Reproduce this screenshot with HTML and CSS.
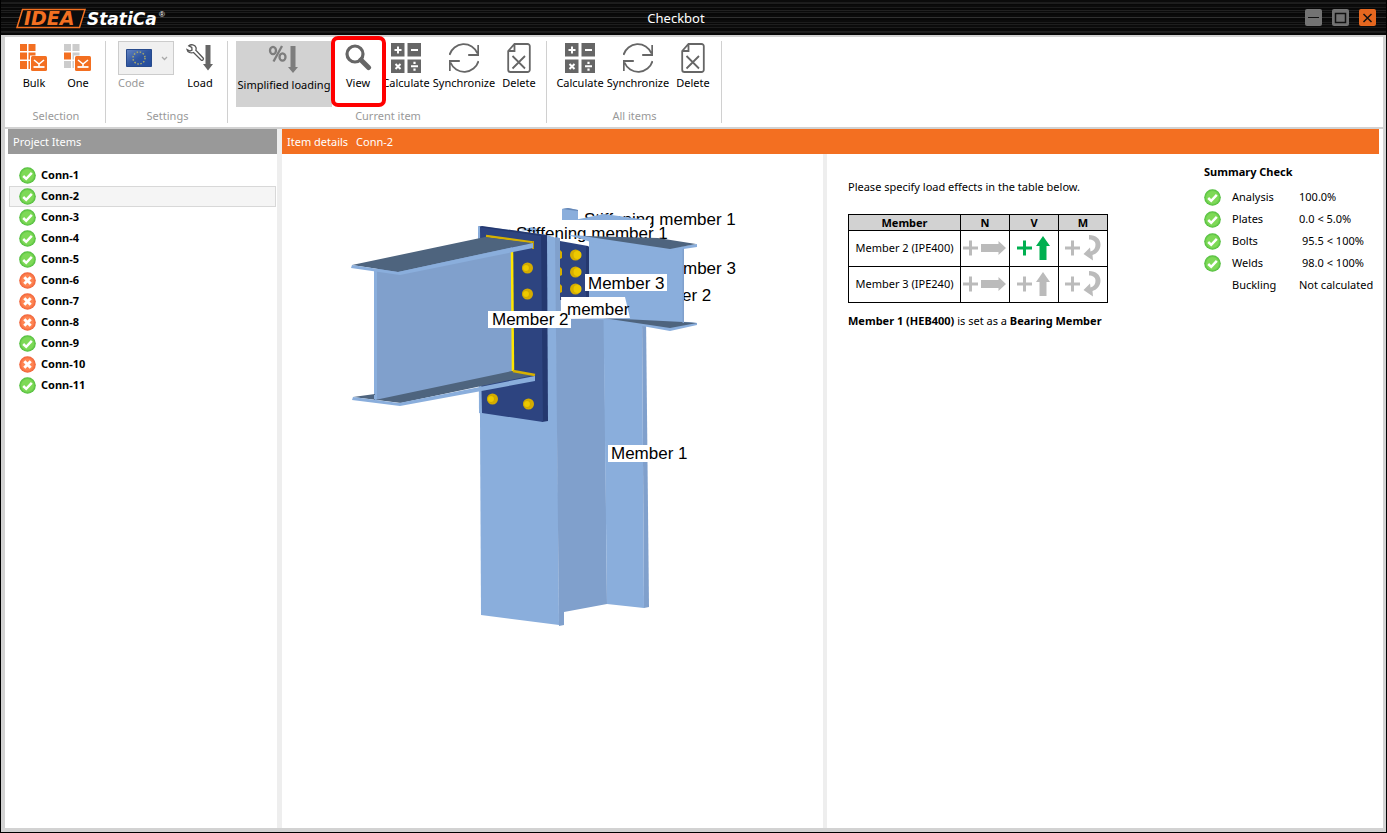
FILE: index.html
```html
<!DOCTYPE html>
<html lang="en">
<head>
<meta charset="utf-8">
<title>Checkbot</title>
<link rel="stylesheet" href="styles.css">
</head>
<body>
<svg class="defs" aria-hidden="true">
  <defs>
    <radialGradient id="gOk"><stop offset="0.7" stop-color="#7ed957"/><stop offset="1" stop-color="#4cba3a"/></radialGradient>
    <radialGradient id="gBad"><stop offset="0.65" stop-color="#ff8552"/><stop offset="1" stop-color="#ee6038"/></radialGradient>
    <symbol id="ok" viewBox="0 0 17 17"><circle cx="8.5" cy="8.5" r="8.3" fill="url(#gOk)"/><path d="M4.2 9l3 2.8 5.6-6" fill="none" stroke="#fff" stroke-width="2.5"/></symbol>
    <symbol id="bad" viewBox="0 0 17 17"><circle cx="8.5" cy="8.5" r="8.3" fill="url(#gBad)"/><path d="M5.3 5.3l6.4 6.4M11.7 5.3l-6.4 6.4" fill="none" stroke="#fff" stroke-width="3"/></symbol>
    <symbol id="calc" viewBox="0 0 30 30"><path fill="#666" d="M0 0h13.500v13.500H0zM16.500 0H30v13.500H16.500zM0 16.500h13.500V30H0zM16.500 16.500H30V30H16.500z"/><path d="M3.500 7h7M7 3.500v7M20 7h7M4.500 21l5 5M9.500 21l-5 5M20 23.300h7" stroke="#fff" stroke-width="2"/><path d="M22.400 18.800h2.200v2.200h-2.200zM22.400 25.600h2.200v2.200h-2.200z" fill="#fff"/></symbol>
    <symbol id="sync" viewBox="0 0 30 30"><path d="M.5 12A14.800 14.800 0 0 1 28.500 10.500M29.200 2v10h-10M29.500 18A14.800 14.800 0 0 1 1.500 19.500M.8 28V18h10" fill="none" stroke="#666" stroke-width="1.800"/></symbol>
    <symbol id="del" viewBox="0 0 24 30"><path d="M7.500 1H20.500a2.300 2.300 0 0 1 2.300 2.300V26.700a2.300 2.300 0 0 1-2.300 2.300H3.500a2.300 2.300 0 0 1-2.300-2.300V8zM7.500 1V8H1.200" fill="none" stroke="#666" stroke-width="1.800"/><path d="M5.500 13l12.500 12.500M18 13L5.500 25.500" stroke="#666" stroke-width="1.800"/></symbol>
    <symbol id="pick" viewBox="0 0 18 17"><path d="M1 1.500h17v15H1z" fill="#fff"/><rect x="2" y="2" width="16" height="15" rx="1.500" fill="#f36f21"/><path d="M4.500 13h11" stroke="#fff" stroke-width="1.800"/><path d="M5 6l5 4 5-4M10 9v3.500" fill="none" stroke="#fff" stroke-width="1.600"/></symbol>
    <symbol id="loadN" viewBox="0 0 44 26"><path d="M0 13h15M7.500 5.500v15" stroke="currentColor" stroke-width="3"/><path d="M18 9h17.500V6L43 13l-7.500 7v-3H18z" fill="currentColor"/></symbol>
    <symbol id="loadV" viewBox="0 0 44 26"><path d="M5 13h15M12.500 5.500v15" stroke="currentColor" stroke-width="3"/><path d="M27.500 25V11H24L31 1l7 10h-3.500v14z" fill="currentColor"/></symbol>
    <symbol id="loadM" viewBox="0 0 44 26"><path d="M4 13h15M11.500 5.500v15" stroke="currentColor" stroke-width="3"/><path d="M28 0c7 0 11.500 4 11.500 9.500 0 5-3 9-8 10.500l.5 5.500-9.500-6.500 6.500-6.500.5 4c3.500-1 5-3.500 5-7 0-3.500-3-5-6.500-5z" fill="currentColor"/></symbol>
  </defs>
</svg>

<div class="window">
  <header class="titlebar">
    <svg class="brand" width="152" height="24" viewBox="0 0 152 24" role="img" aria-label="IDEA StatiCa">
      <path d="M6.500 3.500h62.500l-5.500 18H1z" fill="#0c0c0c" stroke="#f37021" stroke-width="1.500"/>
      <text class="idea" x="8" y="19">IDEA</text>
      <text class="statica" x="71" y="19">StatiCa</text>
      <text class="reg" x="143" y="11">®</text>
    </svg>
    <h1 class="title">Checkbot</h1>
    <div class="controls">
      <button aria-label="Minimize"><svg viewBox="0 0 17 17"><path d="M3 8.500h11" stroke="#111"/></svg></button>
      <button aria-label="Maximize"><svg viewBox="0 0 17 17"><path d="M3.500 4.500h10v9h-10z" fill="none" stroke="#111" stroke-width="1.500"/></svg></button>
      <button class="close" aria-label="Close"><svg viewBox="0 0 17 17"><path d="M4.500 5l8 8M12.500 5l-8 8" stroke="#111" stroke-width="1.500"/></svg></button>
    </div>
  </header>

  <div class="frame">
    <nav class="ribbon">
      <section class="group">
        <div class="tools">
          <button class="tool"><svg width="28" height="30" viewBox="0 0 28 30"><path fill="#f36f21" d="M0 1h7v7H0zM8.500 1h7v7h-7zM0 9.500h7v7H0zM8.500 9.500h7v7h-7zM0 18h7v8H0zM8.500 18h7v8h-7z"/><use href="#pick" x="9" y="11" width="18" height="17"/></svg><span>Bulk</span></button>
          <button class="tool"><svg width="28" height="30" viewBox="0 0 28 30"><path fill="#ccc" d="M0 1h7v7H0zM8.500 1h7v7h-7zM8.500 9.500h7v7h-7zM0 18h7v7H0zM8.500 18h7v7h-7z"/><path fill="#f36f21" d="M0 9.500h7v7H0z"/><use href="#pick" x="9" y="11" width="18" height="17"/></svg><span>One</span></button>
        </div>
        <h2>Selection</h2>
      </section>
      <section class="group">
        <div class="tools spaced">
          <div class="code">
            <button class="combo" aria-label="Code" disabled>
              <svg width="26" height="18" viewBox="0 0 26 18"><defs><linearGradient id="eu" x2="1" y2="1"><stop stop-color="#6485c4"/><stop offset=".5" stop-color="#2f559f"/><stop offset="1" stop-color="#224b9c"/></linearGradient></defs><path fill="url(#eu)" stroke="#274a8c" d="M.5.500h25v17H.5z"/><circle cx="13" cy="9" r="6" fill="none" stroke="#a8a86a" stroke-width="1.500" stroke-dasharray="1.500 1.640"/></svg>
              <svg width="7" height="5" viewBox="0 0 7 5"><path d="M1 1l2.500 2.500L6 1" fill="none" stroke="#aaa" stroke-width="1.300"/></svg>
            </button>
            <span>Code</span>
          </div>
          <button class="tool"><svg width="28" height="30" viewBox="0 0 28 30"><path d="M1 6.500l3 1.500 2-1-.2-2.500-3-1.700C5 1 9 1.500 10 4.500c.4 1.200.2 2-.2 2.700l7.500 8c.7 1.200-1 2.800-2.200 1.800L7.500 9.500C5 10.500 1.500 9.500 1 6.500z" fill="#fff" stroke="#555" stroke-width="1.300"/><path fill="#666" d="M19.500 2h5v19h2.500l-5 6.500-5-6.500h2.500z"/></svg><span>Load</span></button>
        </div>
        <h2>Settings</h2>
      </section>
      <section class="group">
        <div class="tools wide">
          <button class="tool pressed"><svg width="32" height="30" viewBox="0 0 32 30"><g fill="none" stroke="#7d7d7d" stroke-width="2.300"><ellipse cx="5" cy="5.500" rx="3" ry="3.700"/><ellipse cx="14.500" cy="12" rx="3" ry="3.700"/><path d="M14 1L5.500 16.500"/></g><path fill="#7d7d7d" d="M22.500 1h5v21h2.500l-5 6-5-6h2.500z"/></svg><span>Simplified loading</span></button>
          <button class="tool view"><svg width="28" height="30" viewBox="0 0 28 30"><circle cx="11" cy="11" r="8" fill="none" stroke="#666" stroke-width="3.200"/><path d="M17 17l7.500 7.500" stroke="#666" stroke-width="5" stroke-linecap="round"/></svg><span>View</span></button>
          <button class="tool calc"><svg width="30" height="30"><use href="#calc"/></svg><span>Calculate</span></button>
          <button class="tool sync"><svg width="30" height="30"><use href="#sync"/></svg><span>Synchronize</span></button>
          <button class="tool"><svg width="24" height="30"><use href="#del"/></svg><span>Delete</span></button>
        </div>
        <h2>Current item</h2>
      </section>
      <section class="group">
        <div class="tools wide">
          <button class="tool calc"><svg width="30" height="30"><use href="#calc"/></svg><span>Calculate</span></button>
          <button class="tool sync"><svg width="30" height="30"><use href="#sync"/></svg><span>Synchronize</span></button>
          <button class="tool"><svg width="24" height="30"><use href="#del"/></svg><span>Delete</span></button>
        </div>
        <h2>All items</h2>
      </section>
    </nav>

    <main class="work">
      <aside class="items">
        <h2 class="bar gray">Project Items</h2>
        <ul>
          <li><svg><use href="#ok"/></svg>Conn-1</li>
          <li class="selected"><svg><use href="#ok"/></svg>Conn-2</li>
          <li><svg><use href="#ok"/></svg>Conn-3</li>
          <li><svg><use href="#ok"/></svg>Conn-4</li>
          <li><svg><use href="#ok"/></svg>Conn-5</li>
          <li><svg><use href="#bad"/></svg>Conn-6</li>
          <li><svg><use href="#bad"/></svg>Conn-7</li>
          <li><svg><use href="#bad"/></svg>Conn-8</li>
          <li><svg><use href="#ok"/></svg>Conn-9</li>
          <li><svg><use href="#bad"/></svg>Conn-10</li>
          <li><svg><use href="#ok"/></svg>Conn-11</li>
        </ul>
      </aside>
      <section class="details">
        <h2 class="bar orange"><span>Item details</span><span>Conn-2</span></h2>
        <div class="panes">
          <div class="scene">
            <svg width="541" height="500" viewBox="282 154 541 500" role="img" aria-label="Connection Conn-2 model">
              <g class="tag"><text x="584" y="225">Stiffening member 1</text><text x="683" y="274">mber 3</text><text x="682" y="301">er 2</text></g>
              <path fill="#8aaedc" d="M562 209l6-1 10 2v11h-16z"/><path fill="#6687b5" d="M562 209l6-1 10 2v1z"/>
              <path fill="#fff" d="M514 226l48-6h88v20H514z"/>
              <path fill="#8aaedc" d="M574 220l30-6 44 6zM521 230l11-3 6 2v4z"/>
              <g class="tag"><text x="516" y="239">Stiffening member 1</text></g>
              <!-- column -->
              <path fill="#8aaedc" d="M479 226l68 9 9 3 3 387-78-10z"/>
              <path fill="#80a0cc" d="M555 237l5 1 1 75h43l3 291-43 8v13l-5 1z"/>
              <path fill="#8aaedc" d="M603.500 315H642l2 293-37-4z"/>
              <path fill="#80a0cc" d="M642 315h4l3 292-5 1z"/>
              <!-- side beam -->
              <path fill="#2d4480" d="M560 241l28 5v54h-28z"/><path fill="#24386f" d="M586 246l3 .5V300h-3z"/>
              <path fill="#8aaedc" d="M589 240l95 8v78l-95-7z"/>
              <path fill="#8aaedc" d="M568 235l20 1 82 12 27-4v3l-27 4-79-9z"/>
              <path fill="#4e647e" d="M583 236l75 2 38 6-26 5z"/>
              <path fill="#8aaedc" d="M603 319l86 3 8 1v2l-27 6z"/>
              <path fill="#4e647e" d="M603 318l80 4 14 1-27 5z"/>
              <path fill="#80a0cc" d="M682.500 249l1.500-.5V323h-1.500z"/>
              <g fill="#d6ae00"><path d="M560 250l2 2v6l-2 1zM560 267l2 2v6l-2 1zM560 284l2 2v6l-2 1z"/><circle cx="575.500" cy="255" r="5.500"/><circle cx="575.500" cy="272" r="5.500"/><circle cx="575.500" cy="289" r="5.500"/></g>
              <g fill="#edc900"><circle cx="577.500" cy="255" r="4"/><circle cx="577.500" cy="272" r="4"/><circle cx="577.500" cy="289" r="4"/></g>
              <!-- end plate -->
              <path fill="#24386f" d="M478 227l4-1 65 9 1 186-6 1z"/>
              <path fill="#2d4480" d="M478 227l63 9 2 186-61-9z"/>
              <path fill="#8aaedc" d="M478 226l2 .5 1 187-2-.5z"/>
              <path d="M486 236l47 6.500" stroke="#d7b100" stroke-width="2.500"/><path d="M533 241v8" stroke="#bd9a00" stroke-width="2"/>
              <path fill="#80a0cc" d="M375 269l137-22 1 126-138 28z"/>
              <path d="M512 250l1 122" stroke="#ffe600" stroke-width="2.500"/>
              <path fill="#4e647e" d="M352 265l133-28 47 6-134 29z"/>
              <path fill="#8aaedc" d="M352 265l46 7 135-29v5l-133 27-49-7z"/>
              <path fill="#8aaedc" d="M374 270h3v130h-3z"/>
              <path fill="#4e647e" d="M353 397l22-3v6l137-29 22 4-133 28z"/>
              <path d="M513 371l22 4" stroke="#d7b100" stroke-width="2.500"/>
              <path fill="#8aaedc" d="M353 397l46 6 136-27v5l-135 25-48-6z"/><path fill="#8aaedc" d="M374 395h3v4h-3z"/>
              <g fill="#d4ac00"><circle cx="527.500" cy="268" r="5.500"/><circle cx="527.500" cy="294" r="5.500"/><circle cx="492.500" cy="399" r="5.500"/><circle cx="528.500" cy="404" r="5.500"/></g>
              <g fill="#edc900" stroke="#bd9a00" stroke-width=".6"><circle cx="526" cy="268" r="3.500"/><circle cx="526" cy="294" r="3.500"/><circle cx="491" cy="399" r="3.500"/><circle cx="527" cy="404" r="3.500"/></g>
              <path fill="#fff" d="M561 297h64l5 21-68 1zM585 274h82v17h-82zM488 311h83v17h-83zM608 445h78v17h-78z"/>
              <g class="tag"><text x="567" y="315">member</text><text x="588" y="289">Member 3</text><text x="492" y="325">Member 2</text><text x="611" y="459">Member 1</text></g>
            </svg>
          </div>
          <div class="side">
            <div class="loads">
              <p>Please specify load effects in the table below.</p>
              <table>
                <thead><tr><th class="name">Member</th><th>N</th><th>V</th><th>M</th></tr></thead>
                <tbody>
                  <tr><td>Member 2 (IPE400)</td><td><button aria-label="N"><svg><use href="#loadN"/></svg></button></td><td><button class="on" aria-label="V"><svg><use href="#loadV"/></svg></button></td><td><button aria-label="M"><svg><use href="#loadM"/></svg></button></td></tr>
                  <tr><td>Member 3 (IPE240)</td><td><button aria-label="N"><svg><use href="#loadN"/></svg></button></td><td><button aria-label="V"><svg><use href="#loadV"/></svg></button></td><td><button aria-label="M"><svg><use href="#loadM"/></svg></button></td></tr>
                </tbody>
              </table>
              <p><b>Member 1 (HEB400)</b> is set as a <b>Bearing Member</b></p>
            </div>
            <div class="summary">
              <h3>Summary Check</h3>
              <dl>
                <div><svg><use href="#ok"/></svg><dt>Analysis</dt><dd>100.0%</dd></div>
                <div><svg><use href="#ok"/></svg><dt>Plates</dt><dd>0.0 &lt; 5.0%</dd></div>
                <div><svg><use href="#ok"/></svg><dt>Bolts</dt><dd class="indent">95.5 &lt; 100%</dd></div>
                <div><svg><use href="#ok"/></svg><dt>Welds</dt><dd class="indent">98.0 &lt; 100%</dd></div>
                <div><svg></svg><dt>Buckling</dt><dd>Not calculated</dd></div>
              </dl>
            </div>
          </div>
        </div>
      </section>
    </main>
  </div>
</div>
</body>
</html>
```
FILE: styles.css
```css
* { box-sizing: border-box; }
body {
  margin: 0;
  color: #000;
  font: 11px/16px "Noto Sans", "Open Sans", sans-serif;
}
h1, h2, h3, p, ul, dl, dd { margin: 0; padding: 0; font-size: inherit; }
button { padding: 0; border: 0; background: none; color: inherit; font: inherit; }
svg { display: block; flex: none; }
.defs { position: absolute; width: 0; height: 0; }

.window { display: flex; flex-direction: column; min-height: 100vh; border: 1px solid #000; border-top: 0; }

.titlebar {
  display: grid;
  grid-template-columns: 152px 1fr 192px;
  align-items: center;
  height: 35px;
  padding: 0 10px 0 15px;
  color: #fff;
  background:
    repeating-linear-gradient(180deg, transparent 0 3px, rgba(255, 255, 255, .09) 3px 4px, transparent 4px 7px),
    repeating-linear-gradient(180deg, #0b0b0b 0 2px, #1c1c1c 2px 3px, #080808 3px 5px);
}
.idea { fill: #f37021; font: italic bold 19px "DejaVu Sans", sans-serif; }
.statica { fill: #fff; font: italic bold 17px "DejaVu Sans", sans-serif; }
.reg { fill: #fff; font: 8px "Liberation Sans", sans-serif; }
.title { font-size: 13px; font-weight: 400; text-align: center; }
.controls { display: flex; justify-content: flex-end; gap: 10px; }
.controls button { width: 17px; height: 17px; border-radius: 2px; background: #737373; }
.controls .close { background: #e5671f; }

.frame { display: flex; flex: 1; flex-direction: column; padding: 2px 3px 4px 4px; background: #d2d2d2; }

.ribbon { display: flex; height: 90px; padding: 4px 0; background: #fff; }
.group { display: flex; flex-direction: column; justify-content: space-between; padding: 0 5px 0 7px; border-right: 1px solid #d0d0d0; }
.group:last-child { padding-right: 6px; }
.group h2 { color: #999; font-weight: 400; line-height: 14px; text-align: center; }
.tools { display: flex; }
.tools.spaced { gap: 4px; padding-left: 5px; }
.tools.wide { padding-left: 1px; }
.tool { display: flex; flex-direction: column; align-items: center; gap: 2px; width: 44px; height: 66px; padding-top: 2px; white-space: nowrap; }
.tool.calc { width: 50px; }
.tool.sync { width: 66px; }
.tool.pressed { width: 96px; padding-top: 4px; margin-right: 4px; background: #d2d2d2; }
.tool.view { position: relative; margin-right: 1px; }
.tool.view::after { content: ""; position: absolute; inset: -5px -6px 0 -5px; border: 4px solid #f00; border-radius: 7px; }
.code { width: 56px; color: #999; }
.combo { display: flex; align-items: center; justify-content: space-between; width: 56px; height: 34px; padding: 0 5px 0 7px; border: 1px solid #ccc; background: #f0f0f0; }

.work { display: flex; flex: 1; margin-top: 2px; background: #eee; }
.items { width: 272px; padding-left: 3px; background: #fff; }
.bar { display: flex; gap: 8px; height: 25px; padding: 0 5px; color: #fff; font-weight: 400; line-height: 25px; }
.gray { background: #999; }
.orange { background: #f36f21; }
.items ul { padding: 11px 1px 0; list-style: none; font-weight: 700; }
.items li { display: flex; align-items: center; gap: 5px; height: 21px; padding: 0 0 2px 9px; border: 1px solid transparent; }
.items li svg, .summary svg { width: 17px; height: 17px; }
.items li svg { margin-top: 2px; }
.items .selected { border-color: #d8d8d8; background: #f5f5f5; }
.details { display: flex; flex: 1; flex-direction: column; margin-left: 5px; background: #fff; }
.details .bar { margin-right: 4px; }
.panes { display: flex; flex: 1; }
.scene { flex: none; border-right: 4px solid #eee; }
.tag { font: 17px "Liberation Sans", sans-serif; }
.side { display: flex; flex: 1; justify-content: space-between; padding: 10px 7px 0 21px; }
.loads { padding-top: 15px; }
.loads table { margin: 19px 0 10px; border-collapse: collapse; }
th, td { width: 49px; height: 36px; padding: 0 0 2px; border: 1px solid #000; text-align: center; }
th { height: 16px; padding: 0; background: #d2d2d2; line-height: 15px; }
th.name { width: 112px; }
td svg { width: 44px; height: 26px; }
td button { display: block; margin: 0 auto; color: #bbb; }
td .on { color: #00b050; }
.summary { width: 172px; }
.summary dl { padding-top: 6px; }
.summary dl div { display: grid; grid-template-columns: 17px 56px 1fr; column-gap: 11px; align-items: center; height: 22px; }
.indent { padding-left: 3px; }
dd { white-space: nowrap; }
```
